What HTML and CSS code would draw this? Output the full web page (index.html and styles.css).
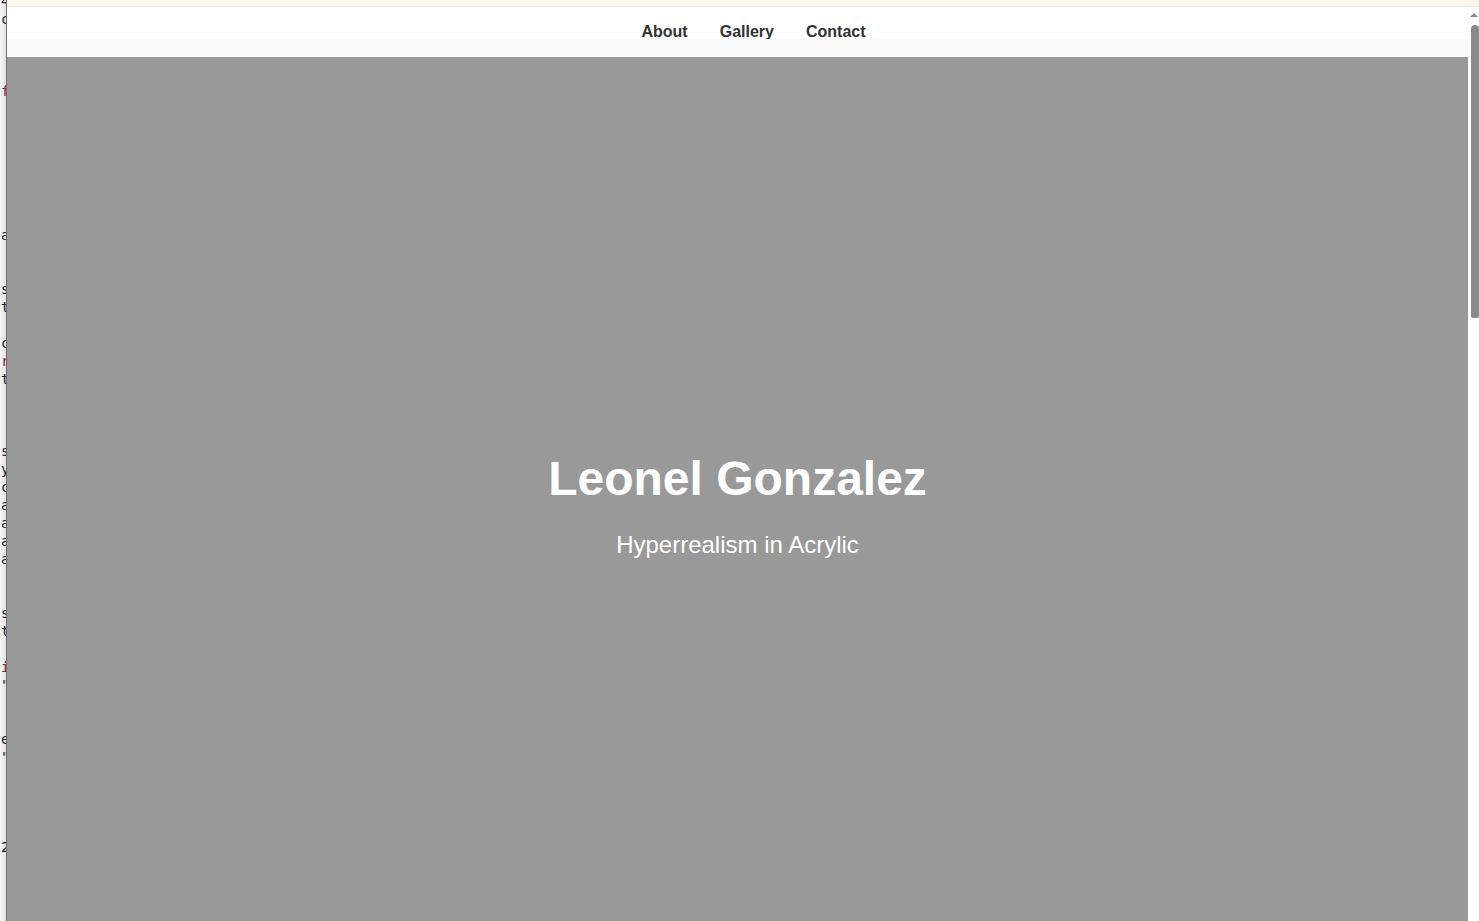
FILE: index.html
```html
<!DOCTYPE html>
<html lang="en">
<head>
<meta charset="utf-8">
<title>Leonel Gonzalez</title>
<link rel="stylesheet" href="styles.css">
</head>
<body>
<div class="frame">
  <div class="code-strip">
<pre class="code"><span>4</span>
<span>c</span>



<span class="kw">f</span>







<span>a</span>


<span>s</span>
<span>t</span>

<span>c</span>
<span class="kw">r</span>
<span>t</span>



<span>s</span>
<span>y</span>
<span>c</span>
<span>a</span>
<span>a</span>
<span>a</span>
<span>a</span>


<span>s</span>
<span>t</span>

<span class="kw">i</span>
<span>"</span>


<span>e</span>
<span>"</span>




<span>2</span></pre>
  </div>
  <div class="window">
    <div class="top-strip"></div>
    <div class="viewport">
      <div class="page">
        <header class="site-header">
          <nav class="nav">
            <a href="#about">About</a>
            <a href="#gallery">Gallery</a>
            <a href="#contact">Contact</a>
          </nav>
          <div class="nav-band"></div>
        </header>
        <section class="hero">
          <h1 class="hero-title">Leonel Gonzalez</h1>
          <p class="hero-sub">Hyperrealism in Acrylic</p>
        </section>
      </div>
      <div class="scrollbar">
        <div class="scroll-arrow"></div>
        <div class="scroll-thumb"></div>
      </div>
    </div>
  </div>
</div>
</body>
</html>
```

FILE: styles.css
```css
html, body {
  margin: 0;
  padding: 0;
  width: 1479px;
  height: 921px;
  overflow: hidden;
  background: #ffffff;
  font-family: "Liberation Sans", Arial, sans-serif;
}

.frame {
  display: flex;
  height: 921px;
}

.code-strip {
  width: 6px;
  flex: none;
  overflow: hidden;
  background: linear-gradient(to right, #f6f6f6, #e2e2e2);
  border-right: 1px solid #6e6e6e;
}

.code {
  margin: -8px 0 0 1px;
  font-family: "DejaVu Sans Mono", monospace;
  font-size: 14px;
  line-height: 18px;
  color: #1b1b3a;
}

.code .kw {
  color: #8b1a3a;
}

.window {
  flex: 1;
  display: flex;
  flex-direction: column;
  min-width: 0;
}

.top-strip {
  height: 6px;
  flex: none;
  background: #fdf6ef;
  border-bottom: 1px solid #f2e2cf;
}

.viewport {
  flex: 1;
  display: flex;
  min-height: 0;
}

.page {
  flex: 1;
  display: flex;
  flex-direction: column;
  min-width: 0;
}

.site-header {
  flex: none;
}

.nav {
  height: 32px;
  box-sizing: border-box;
  padding: 16px 0 0 32px;
  background: #ffffff;
  display: flex;
  justify-content: center;
  gap: 32px;
  overflow: hidden;
}

.nav a {
  color: #333333;
  font-weight: bold;
  font-size: 16px;
  line-height: 18px;
  text-decoration: none;
}

.nav-band {
  height: 18px;
  background: #f9f9f9;
}

.hero {
  flex: 1;
  background: #999999;
  display: flex;
  flex-direction: column;
  align-items: center;
  padding-top: 394px;
  color: #ffffff;
}

.hero-title {
  margin: 0;
  font-size: 48px;
  font-weight: bold;
  line-height: 55px;
}

.hero-sub {
  margin: 25px 0 0;
  font-size: 24px;
  line-height: 28px;
}

.scrollbar {
  width: 11px;
  flex: none;
  background: #fdfdfd;
  display: flex;
  flex-direction: column;
  align-items: flex-end;
}

.scroll-arrow {
  width: 0;
  height: 0;
  margin: 6px 1px 0 0;
  border-left: 4px solid transparent;
  border-right: 4px solid transparent;
  border-bottom: 4px solid #8a8a8a;
}

.scroll-thumb {
  width: 8px;
  height: 293px;
  margin-top: 8px;
  background: #8a8a8a;
  border-radius: 4px 4px 2px 2px;
}
```
